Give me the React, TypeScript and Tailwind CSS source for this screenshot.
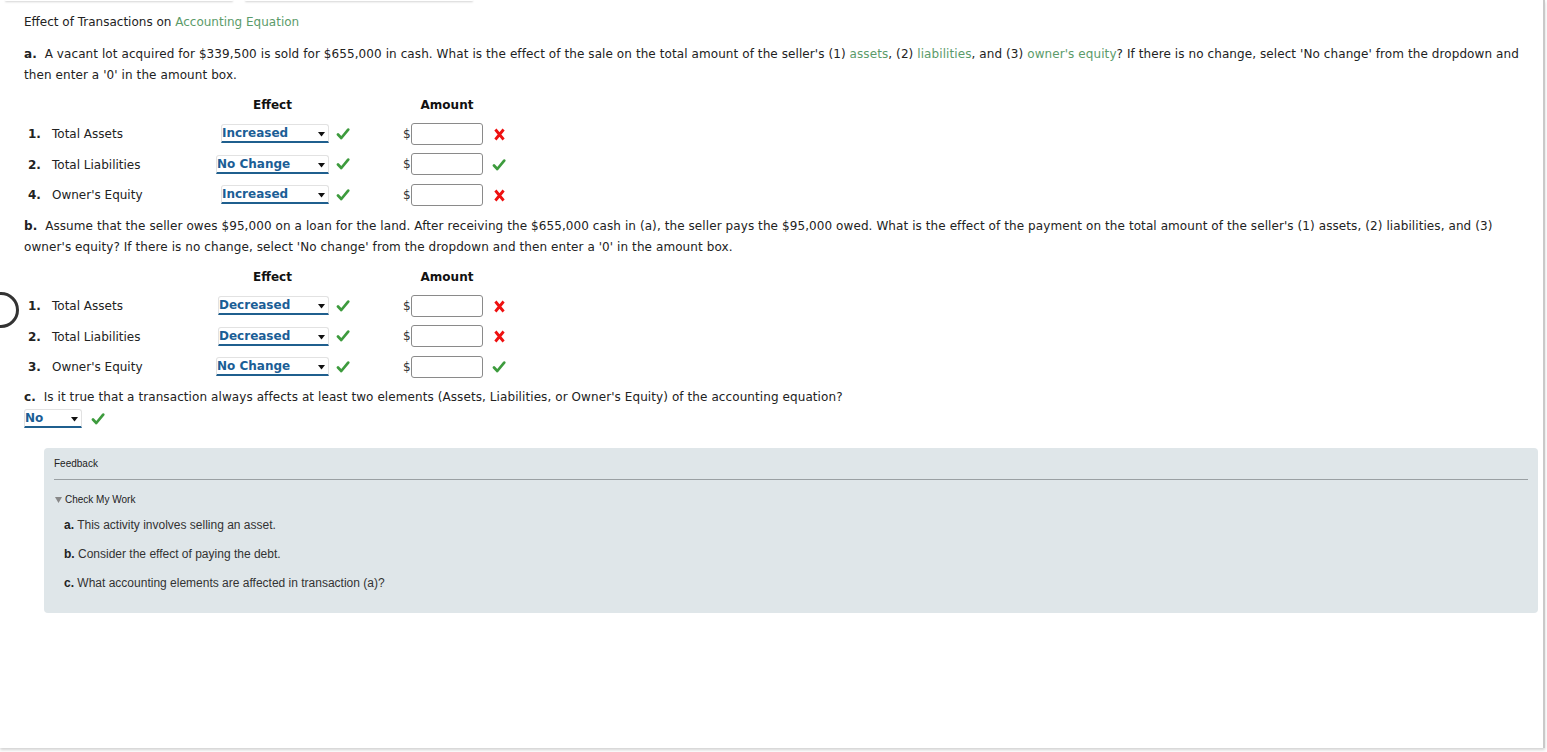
import React from "react";

const V = { fontFamily: '"DejaVu Sans", Verdana, sans-serif' };
const A = { fontFamily: '"Liberation Sans", Arial, sans-serif' };

function Check() {
  return (
    <svg width="14" height="14" viewBox="0 0 14 14" className="block">
      <path d="M2 7.5 L5.3 11 L12.2 2.6" fill="none" stroke="#3d9b3d" strokeWidth="2.7" strokeLinecap="round" strokeLinejoin="round" />
    </svg>
  );
}

function Cross() {
  return (
    <svg width="11" height="13" viewBox="0 0 11 13" className="block">
      <path d="M1.4 1.5 L9.6 11.5 M9.6 1.5 L1.4 11.5" fill="none" stroke="#ee1111" strokeWidth="2.8" />
    </svg>
  );
}

function Select({ value, w }: { value: string; w: string }) {
  return (
    <div className={`relative flex h-[19px] items-center rounded-t-[3px] border-x border-t border-[#e2e2e2] border-b-2 border-b-[#1f5f8e] bg-white pr-[14px] ${w}`}>
      <span className="text-[12px] font-bold leading-none text-[#1b5e96]" style={V}>{value}</span>
      <svg width="7" height="5" viewBox="0 0 7 5" className="absolute right-[3px] top-[7px]">
        <path d="M0 0 H7 L3.5 4.5 Z" fill="#111" />
      </svg>
    </div>
  );
}

function Row({ n, label, effect, ok, selW }: { n: string; label: string; effect: string; ok: boolean; selW: string }) {
  return (
    <div className="flex h-[30.5px] items-center">
      <div className="w-[28px] pl-[4px] pt-[2px] text-[12px] font-bold text-[#222]" style={V}>{n}</div>
      <div className="w-[164px] pt-[2px] text-[12px] text-[#222]" style={V}>{label}</div>
      <div className="flex w-[113px] justify-end">
        <Select value={effect} w={selW} />
      </div>
      <div className="ml-[7px] w-[14px]"><Check /></div>
      <div className="ml-[53px] w-[8px] pt-[1px] text-[12px] text-[#333]" style={V}>$</div>
      <div className="h-[22px] w-[72px] rounded-[3px] border border-[#8a8a8a] bg-white" />
      <div className="ml-[9px] flex w-[14px] justify-center pt-[1px]">{ok ? <Check /> : <Cross />}</div>
    </div>
  );
}

function Header() {
  return (
    <div className="flex h-[21px] items-center text-[12px] font-bold text-[#111]" style={V}>
      <div className="w-[192px]" />
      <div className="w-[113px] text-center">Effect</div>
      <div className="w-[21px]" />
      <div className="w-[53px]" />
      <div className="w-[8px]" />
      <div className="w-[72px] text-center">Amount</div>
    </div>
  );
}

const G = "text-[#5b9b6a]";

export default function App() {
  return (
    <div className="relative h-[752px] w-[1547px] overflow-hidden bg-white">
      <div className="flex h-0 gap-[12px] pl-[5px]">
        <div className="h-[1px] w-[228px] rounded-b-[3px] bg-white shadow-[0_1px_2px_rgba(0,0,0,0.25)]" />
        <div className="h-[1px] w-[228px] rounded-b-[3px] bg-white shadow-[0_1px_2px_rgba(0,0,0,0.25)]" />
      </div>
      <div className="h-[748px] w-[1545px] border-r-2 border-[#c9c9c9] shadow-[0_2px_3px_rgba(0,0,0,0.18)]">
        <div className="pl-[24px] pr-[16px] pt-[12px] text-[12px] leading-[21px] text-[#222]" style={V}>
          <div>
            Effect of Transactions on <span className={G}>Accounting Equation</span>
          </div>
          <p className="mt-[10.5px] tracking-[0.085px]">
            <b>a.</b>&nbsp; A vacant lot acquired for $339,500 is sold for $655,000 in cash. What is the effect of the sale on the total amount of the seller's (1) <span className={G}>assets</span>, (2) <span className={G}>liabilities</span>, and (3) <span className={G}>owner's equity</span>? If there is no change, select 'No change' from the dropdown and then enter a '0' in the amount box.
          </p>
          <div className="mt-[9px]"><Header /></div>
          <div className="mt-[3px]">
            <Row n="1." label="Total Assets" effect="Increased" ok={false} selW="w-[108px]" />
            <Row n="2." label="Total Liabilities" effect="No Change" ok={true} selW="w-[113px]" />
            <Row n="4." label="Owner's Equity" effect="Increased" ok={false} selW="w-[108px]" />
          </div>
          <p className="mt-[5.5px] tracking-[0.085px]">
            <b>b.</b>&nbsp; Assume that the seller owes $95,000 on a loan for the land. After receiving the $655,000 cash in (a), the seller pays the $95,000 owed. What is the effect of the payment on the total amount of the seller's (1) assets, (2) liabilities, and (3) owner's equity? If there is no change, select 'No change' from the dropdown and then enter a '0' in the amount box.
          </p>
          <div className="mt-[9px]"><Header /></div>
          <div className="mt-[3px]">
            <Row n="1." label="Total Assets" effect="Decreased" ok={false} selW="w-[111px]" />
            <Row n="2." label="Total Liabilities" effect="Decreased" ok={false} selW="w-[111px]" />
            <Row n="3." label="Owner's Equity" effect="No Change" ok={true} selW="w-[113px]" />
          </div>
          <p className="mt-[5px] tracking-[0.085px]">
            <b>c.</b>&nbsp; Is it true that a transaction always affects at least two elements (Assets, Liabilities, or Owner's Equity) of the accounting equation?
          </p>
          <div className="flex h-[21px] items-center">
            <Select value="No" w="w-[58px]" />
            <div className="ml-[9px]"><Check /></div>
          </div>
        </div>
        <div className="ml-[44px] mr-[5px] mt-[18.5px] h-[165px] rounded-[4px] bg-[#dfe6e9] px-[10px] pt-[10px]" style={A}>
          <div className="text-[10px] leading-[12px] text-[#222]">Feedback</div>
          <div className="mt-[9px] h-px bg-[#9aa0a3]" />
          <div className="mt-[14px] flex items-center text-[10px] leading-[12px] text-[#222]">
            <svg width="7" height="6" viewBox="0 0 7 6" className="ml-[1px] mr-[3px]">
              <path d="M0 0 H7 L3.5 6 Z" fill="#888" />
            </svg>
            Check My Work
          </div>
          <div className="ml-[10px] mt-[12px] text-[12px] leading-[14px] text-[#333]">
            <div><b className="text-[#222]">a.</b> This activity involves selling an asset.</div>
            <div className="mt-[15px]"><b className="text-[#222]">b.</b> Consider the effect of paying the debt.</div>
            <div className="mt-[15px]"><b className="text-[#222]">c.</b> What accounting elements are affected in transaction (a)?</div>
          </div>
        </div>
      </div>
      <div className="absolute left-[-17px] top-[292px] h-[36px] w-[36px] rounded-full border-[3px] border-[#333]" />
    </div>
  );
}
